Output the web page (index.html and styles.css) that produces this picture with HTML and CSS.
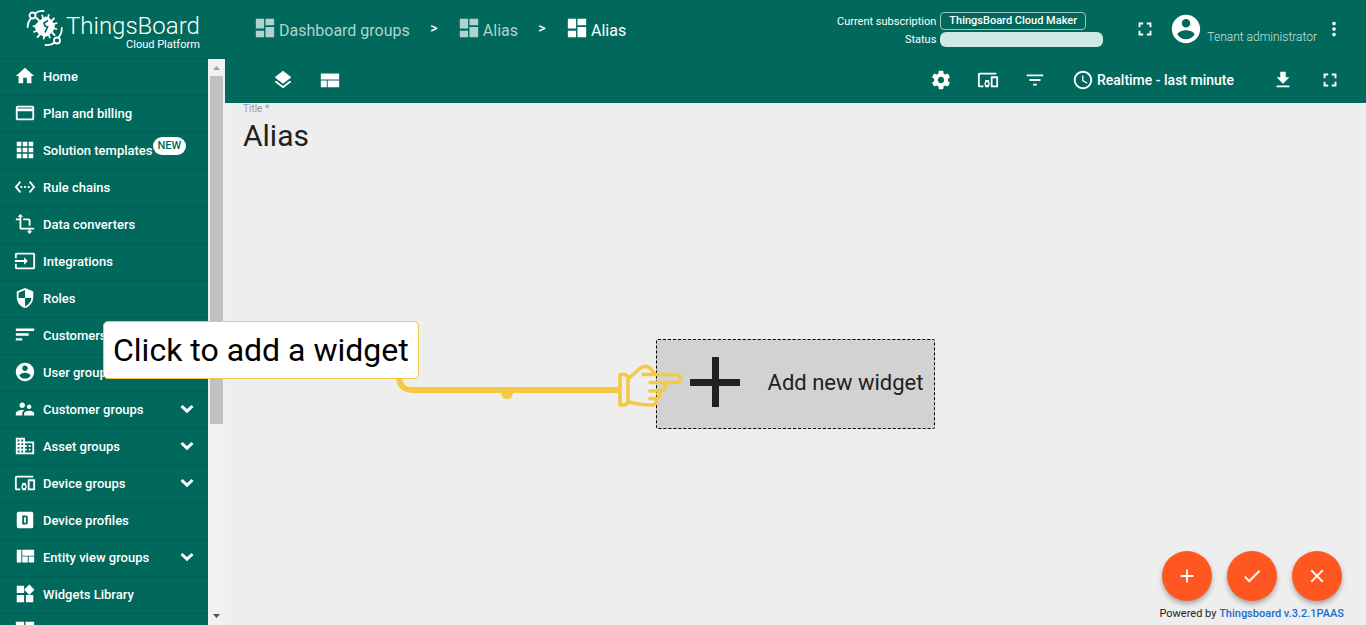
FILE: index.html
```html
<!DOCTYPE html>
<html lang="en">
<head>
<meta charset="utf-8">
<meta name="viewport" content="width=device-width, initial-scale=1">
<title>Alias | ThingsBoard Cloud</title>
<link rel="stylesheet" href="styles.css">
</head>
<body>
<svg class="sprite" aria-hidden="true">
  <symbol id="home" viewBox="0 0 24 24"><path d="M10 20v-6h4v6h5v-8h3L12 3 2 12h3v8z"/></symbol>
  <symbol id="card" viewBox="0 0 24 24"><path d="M20 4H4c-1.110 0-2 .89-2 2v12c0 1.110.89 2 2 2h16c1.110 0 2-.89 2-2V6c0-1.110-.89-2-2-2zm0 14H4v-8h16v8zm0-11H4V6h16v1z"/></symbol>
  <symbol id="apps" viewBox="0 0 24 24"><path d="M3 3h5v5H3zM9.500 3h5v5h-5zM16 3h5v5h-5zM3 9.500h5v5H3zM9.500 9.500h5v5h-5zM16 9.500h5v5h-5zM3 16h5v5H3zM9.500 16h5v5h-5zM16 16h5v5h-5z"/></symbol>
  <symbol id="ethernet" viewBox="0 0 24 24"><path d="M7.770 6.760L6.230 5.480.82 12l5.410 6.520 1.540-1.280L3.420 12l4.350-5.240zM7 13h2v-2H7v2zm10-2h-2v2h2v-2zm-6 2h2v-2h-2v2zm6.770-7.520l-1.540 1.280L20.580 12l-4.350 5.240 1.540 1.280L23.180 12l-5.410-6.520z"/></symbol>
  <symbol id="transform" viewBox="0 0 24 24"><path d="M22 18v-2H8V4h2L7 1 4 4h2v2H2v2h4v8c0 1.100.9 2 2 2h8v2h-2l3 3 3-3h-2v-2h4zM10 8h6v6h2V8c0-1.100-.9-2-2-2h-6v2z"/></symbol>
  <symbol id="input" viewBox="0 0 24 24"><path d="M21 3.010H3c-1.100 0-2 .9-2 2V9h2V4.990h18v14.030H3V15H1v4.010c0 1.100.9 1.980 2 1.980h18c1.100 0 2-.88 2-1.980v-14c0-1.110-.9-2-2-2zM11 16l4-4-4-4v3H1v2h10v3z"/></symbol>
  <symbol id="shield" viewBox="0 0 24 24"><path d="M12 1L3 5v6c0 5.550 3.840 10.740 9 12 5.160-1.260 9-6.450 9-12V5l-9-4zm0 10.990h7c-.53 4.120-3.280 7.790-7 8.940V12H5V6.300l7-3.110v8.800z"/></symbol>
  <symbol id="sort" viewBox="0 0 24 24"><path d="M2 18h7v-2.500H2V18zM2 5v2.500h20V5H2zm0 7.700h14v-2.500H2v2.500z"/></symbol>
  <symbol id="account" viewBox="0 0 24 24"><path d="M12 2C6.480 2 2 6.480 2 12s4.480 10 10 10 10-4.480 10-10S17.520 2 12 2zm0 3c1.660 0 3 1.340 3 3s-1.340 3-3 3-3-1.340-3-3 1.340-3 3-3zm0 14.200c-2.500 0-4.710-1.280-6-3.220.03-1.990 4-3.080 6-3.080 1.990 0 5.970 1.090 6 3.080-1.290 1.940-3.500 3.220-6 3.220z"/></symbol>
  <symbol id="people" viewBox="0 0 24 24"><path d="M16.500 12c1.380 0 2.490-1.120 2.490-2.500S17.880 7 16.500 7 14 8.120 14 9.500s1.120 2.500 2.500 2.500zM9 11c1.660 0 2.990-1.340 2.990-3S10.660 5 9 5 6 6.340 6 8s1.340 3 3 3zm7.500 3c-1.830 0-5.500.92-5.500 2.750V19h11v-2.250c0-1.830-3.670-2.750-5.500-2.750zM9 13c-2.330 0-7 1.170-7 3.500V19h7v-2.250c0-.85.33-2.340 2.370-3.470C10.500 13.100 9.660 13 9 13z"/></symbol>
  <symbol id="building" viewBox="0 0 24 24"><path d="M12 7V3H2v18h20V7H12zM6 19H4v-2h2v2zm0-4H4v-2h2v2zm0-4H4V9h2v2zm0-4H4V5h2v2zm4 12H8v-2h2v2zm0-4H8v-2h2v2zm0-4H8V9h2v2zm0-4H8V5h2v2zm10 12h-8v-2h2v-2h-2v-2h2v-2h-2V9h8v10zm-2-8h-2v2h2v-2zm0 4h-2v2h2v-2z"/></symbol>
  <symbol id="devices" viewBox="0 0 24 24"><path d="M3 6h18V4H3c-1.100 0-2 .9-2 2v12c0 1.100.9 2 2 2h4v-2H3V6zm10 6H9v1.780c-.61.55-1 1.330-1 2.220s.39 1.670 1 2.220V20h4v-1.780c.61-.55 1-1.340 1-2.220s-.39-1.670-1-2.220V12zm-2 5.500c-.83 0-1.500-.67-1.500-1.500s.67-1.500 1.500-1.500 1.500.67 1.500 1.500-.67 1.500-1.500 1.500zM22 8h-6c-.5 0-1 .5-1 1v10c0 .5.5 1 1 1h6c.5 0 1-.5 1-1V9c0-.5-.5-1-1-1zm-1 10h-4v-8h4v8z"/></symbol>
  <symbol id="profile" viewBox="0 0 24 24"><path fill-rule="evenodd" d="M5 3h14a2 2 0 0 1 2 2v14a2 2 0 0 1-2 2H5a2 2 0 0 1-2-2V5a2 2 0 0 1 2-2zm4 4v10h4a2 2 0 0 0 2-2V9a2 2 0 0 0-2-2H9zm2 2h2v6h-2V9z"/></symbol>
  <symbol id="quilt" viewBox="0 0 24 24"><path d="M3 4h5v14H3zM9 4h13v6.500H9zM9 11.500h6V18H9zM16 11.500h6V18h-6z"/></symbol>
  <symbol id="widgets" viewBox="0 0 24 24"><path d="M13 13v8h8v-8h-8zM3 21h8v-8H3v8zM3 3v8h8V3H3zm13.660-1.310L11 7.340 16.660 13l5.660-5.660-5.660-5.650z"/></symbol>
  <symbol id="dashboard" viewBox="0 0 24 24"><path d="M2 12.500h9V2H2zM2 22h9v-7H2zM12.500 22H22V11h-9.500zM12.500 2v7H22V2z"/></symbol>
  <symbol id="chevron" viewBox="0 0 14 10"><path d="M1.500 2L7 7.200 12.500 2" fill="none" stroke="currentColor" stroke-width="3"/></symbol>
  <symbol id="layers" viewBox="0 0 24 24"><path d="M12 18.540l-7.370-5.730L3 14.070l9 7 9-7-1.630-1.270-7.370 5.740zM12 16l7.360-5.730L21 9l-9-7-9 7 1.630 1.270L12 16z"/></symbol>
  <symbol id="compact" viewBox="0 0 24 24"><path d="M2 5h20v6.500H2zM2 12.500h6.500V20H2zM9.500 12.500H22V20H9.500z"/></symbol>
  <symbol id="gear" viewBox="0 0 24 24"><path d="M19.430 12.980c.04-.32.07-.64.07-.98s-.03-.66-.07-.98l2.110-1.650c.19-.15.24-.42.12-.64l-2-3.460c-.12-.22-.39-.3-.61-.22l-2.490 1c-.52-.4-1.080-.73-1.690-.98l-.38-2.650C14.460 2.180 14.250 2 14 2h-4c-.25 0-.46.18-.49.42l-.38 2.650c-.61.25-1.170.59-1.690.98l-2.490-1c-.23-.09-.49 0-.61.22l-2 3.460c-.13.22-.07.49.12.64l2.110 1.650c-.04.32-.07.65-.07.98s.03.66.07.98l-2.110 1.650c-.19.15-.24.42-.12.64l2 3.460c.12.22.39.3.61.22l2.490-1c.52.4 1.080.73 1.690.98l.38 2.650c.03.24.24.42.49.42h4c.25 0 .46-.18.49-.42l.38-2.650c.61-.25 1.170-.59 1.690-.98l2.490 1c.23.09.49 0 .61-.22l2-3.460c.12-.22.07-.49-.12-.64l-2.110-1.650zM12 15.500c-1.930 0-3.500-1.570-3.500-3.500s1.570-3.500 3.500-3.500 3.500 1.570 3.500 3.500-1.570 3.500-3.500 3.500z"/></symbol>
  <symbol id="filter" viewBox="0 0 24 24"><path d="M10 18h4v-2h-4v2zM3 6v2h18V6H3zm3 7h12v-2H6v2z"/></symbol>
  <symbol id="clock" viewBox="0 0 24 24"><path d="M11.990 2C6.470 2 2 6.480 2 12s4.470 10 9.990 10C17.520 22 22 17.520 22 12S17.520 2 11.990 2zM12 20c-4.420 0-8-3.580-8-8s3.580-8 8-8 8 3.580 8 8-3.580 8-8 8zm.5-13H11v6l5.250 3.150.75-1.230-4.500-2.670z"/></symbol>
  <symbol id="download" viewBox="0 0 24 24"><path d="M19 9h-4V3H9v6H5l7 7 7-7zM5 18v2h14v-2H5z"/></symbol>
  <symbol id="fullscreen" viewBox="0 0 24 24"><path d="M7 14H5v5h5v-2H7v-3zm-2-4h2V7h3V5H5v5zm12 7h-3v2h5v-5h-2v3zM14 5v2h3v3h2V5h-5z"/></symbol>
  <symbol id="more" viewBox="0 0 24 24"><path d="M12 8c1.100 0 2-.9 2-2s-.9-2-2-2-2 .9-2 2 .9 2 2 2zm0 2c-1.100 0-2 .9-2 2s.9 2 2 2 2-.9 2-2-.9-2-2-2zm0 6c-1.100 0-2 .9-2 2s.9 2 2 2 2-.9 2-2-.9-2-2-2z"/></symbol>
  <symbol id="add" viewBox="0 0 24 24"><path d="M19 13h-6v6h-2v-6H5v-2h6V5h2v6h6v2z"/></symbol>
  <symbol id="check" viewBox="0 0 24 24"><path d="M9 16.170L4.830 12l-1.420 1.410L9 19 21 7l-1.410-1.410z"/></symbol>
  <symbol id="close" viewBox="0 0 24 24"><path d="M19 6.410L17.590 5 12 10.590 6.410 5 5 6.410 10.590 12 5 17.590 6.410 19 12 13.410 17.590 19 19 17.590 13.410 12z"/></symbol>
</svg>

<div class="app">
  <aside class="sidebar">
    <a class="logo" href="#">
      <svg class="logo-mark" viewBox="0 0 38 40" aria-hidden="true">
        <g fill="none" stroke="currentColor" stroke-width="1.800" stroke-linecap="round">
          <circle cx="6.500" cy="7.500" r="3"/><path d="M9 5.500C11.500 3.500 14 2.500 17.500 3M5 10.500C2.500 13 1.700 15 1.700 19"/>
          <circle cx="31" cy="32.500" r="3"/><path d="M28.500 34.500C26 37 23 37.500 19.500 37M32.500 29.500C35.500 26 36 24 35.700 20"/>
        </g>
        <path stroke="currentColor" stroke-width="1.800" stroke-linecap="round" d="M13 12.500l-2.500-2.500M17 10l-.8-2.500M22 9.500l.8-2.500M26 12.500l2-2M28 16l2.500-.8M28.500 20.500l2 .5M26.500 25l2 2M23 27.500l.8 2M18 28.500l-.2 2M13.500 27l-2 2M10.500 23l-2.500.8M9.500 18.500l-2-.3"/>
        <path fill="currentColor" d="M19.500 8.500l3.500 1 5 6 1 3-2 5-5 4.500-3.500 1-6-3-3.500-5.500.5-4 4-4z"/>
        <path fill="none" stroke="#00695c" stroke-width="1.700" d="M22 12.500l-4 2.500 1 3 2.500 1-2.500 5.500"/>
      </svg>
      <span class="logo-text"><span class="logo-name">ThingsBoard</span><span class="logo-sub">Cloud Platform</span></span>
    </a>
    <div class="menu">
      <nav class="menu-list">
        <a class="menu-item" href="#"><svg class="icon"><use href="#home"/></svg>Home</a>
        <a class="menu-item" href="#"><svg class="icon"><use href="#card"/></svg>Plan and billing</a>
        <a class="menu-item" href="#"><svg class="icon"><use href="#apps"/></svg>Solution templates<span class="tag">NEW</span></a>
        <a class="menu-item" href="#"><svg class="icon"><use href="#ethernet"/></svg>Rule chains</a>
        <a class="menu-item" href="#"><svg class="icon"><use href="#transform"/></svg>Data converters</a>
        <a class="menu-item" href="#"><svg class="icon"><use href="#input"/></svg>Integrations</a>
        <a class="menu-item" href="#"><svg class="icon"><use href="#shield"/></svg>Roles</a>
        <a class="menu-item" href="#"><svg class="icon"><use href="#sort"/></svg>Customers</a>
        <a class="menu-item" href="#"><svg class="icon"><use href="#account"/></svg>User groups</a>
        <a class="menu-item" href="#"><svg class="icon"><use href="#people"/></svg>Customer groups<svg class="chevron"><use href="#chevron"/></svg></a>
        <a class="menu-item" href="#"><svg class="icon"><use href="#building"/></svg>Asset groups<svg class="chevron"><use href="#chevron"/></svg></a>
        <a class="menu-item" href="#"><svg class="icon"><use href="#devices"/></svg>Device groups<svg class="chevron"><use href="#chevron"/></svg></a>
        <a class="menu-item" href="#"><svg class="icon"><use href="#profile"/></svg>Device profiles</a>
        <a class="menu-item" href="#"><svg class="icon"><use href="#quilt"/></svg>Entity view groups<svg class="chevron"><use href="#chevron"/></svg></a>
        <a class="menu-item" href="#"><svg class="icon"><use href="#widgets"/></svg>Widgets Library</a>
        <a class="menu-item" href="#" aria-label="Dashboard groups"><svg class="icon"><use href="#dashboard"/></svg></a>
      </nav>
      <div class="scrollbar" aria-hidden="true">
        <svg class="scroll-arrow muted" viewBox="0 0 17 17"><path d="M5 11l3.500-4 3.500 4z"/></svg>
        <div class="scroll-track"><div class="scroll-thumb"></div></div>
        <svg class="scroll-arrow" viewBox="0 0 17 17"><path d="M5 6l3.500 4L12 6z"/></svg>
      </div>
    </div>
  </aside>

  <div class="page">
    <header class="topbar">
      <nav class="crumbs" aria-label="Breadcrumb">
        <a class="crumb" href="#"><svg class="icon"><use href="#dashboard"/></svg>Dashboard groups</a>
        <span class="crumb-sep">&gt;</span>
        <a class="crumb" href="#"><svg class="icon"><use href="#dashboard"/></svg>Alias</a>
        <span class="crumb-sep">&gt;</span>
        <span class="crumb current"><svg class="icon"><use href="#dashboard"/></svg>Alias</span>
      </nav>
      <div class="subscription">
        <span class="sub-label">Current subscription</span><a class="plan" href="#">ThingsBoard Cloud Maker</a>
        <span class="sub-label">Status</span><span class="status"></span>
      </div>
      <div class="user">
        <button class="icon-button" type="button" aria-label="Fullscreen"><svg class="icon"><use href="#fullscreen"/></svg></button>
        <svg class="avatar"><use href="#account"/></svg>
        <span class="role">Tenant administrator</span>
        <button class="icon-button more" type="button" aria-label="User menu"><svg class="icon"><use href="#more"/></svg></button>
      </div>
    </header>

    <div class="toolbar">
      <div class="tools">
        <button class="icon-button" type="button" aria-label="Manage states"><svg class="icon"><use href="#layers"/></svg></button>
        <button class="icon-button" type="button" aria-label="Manage layouts"><svg class="icon"><use href="#compact"/></svg></button>
      </div>
      <div class="tools">
        <button class="icon-button" type="button" aria-label="Settings"><svg class="icon"><use href="#gear"/></svg></button>
        <button class="icon-button" type="button" aria-label="Entity aliases"><svg class="icon"><use href="#devices"/></svg></button>
        <button class="icon-button" type="button" aria-label="Filters"><svg class="icon"><use href="#filter"/></svg></button>
        <button class="icon-button timewindow" type="button"><svg class="icon"><use href="#clock"/></svg>Realtime - last minute</button>
        <button class="icon-button" type="button" aria-label="Export"><svg class="icon"><use href="#download"/></svg></button>
        <button class="icon-button" type="button" aria-label="Expand dashboard"><svg class="icon"><use href="#fullscreen"/></svg></button>
      </div>
    </div>

    <main class="dashboard">
      <div class="title-field">
        <label class="title-label" for="title">Title *</label>
        <input class="title-input" id="title" type="text" value="Alias">
      </div>
      <div class="canvas">
        <button class="add-widget" type="button">
          <svg class="plus" viewBox="0 0 50 50" aria-hidden="true"><path d="M22 0h7v22h21v7H29v21h-7V29H0v-7h22z"/></svg>
          Add new widget
        </button>
      </div>
      <div class="corner">
        <div class="fabs">
          <button class="fab" type="button" aria-label="Add"><svg class="icon"><use href="#add"/></svg></button>
          <button class="fab" type="button" aria-label="Apply"><svg class="icon"><use href="#check"/></svg></button>
          <button class="fab" type="button" aria-label="Cancel"><svg class="icon"><use href="#close"/></svg></button>
        </div>
        <span class="powered">Powered by <a href="#">Thingsboard v.3.2.1PAAS</a></span>
      </div>
    </main>
  </div>

  <svg class="pointer" viewBox="0 0 288 48" aria-hidden="true">
    <g fill="none" stroke="#f6c945">
      <path stroke-width="6" d="M3 14C3 22 8 27 16 27H223"/>
      <g stroke-width="3.600" stroke-linejoin="round" stroke-linecap="round">
        <path fill="#eee" d="M224 11.500h5l3 2v26l-3 2.500h-5z"/>
        <path d="M233 15L244 5.500C248 2.500 252 3 255 6l4 5"/>
        <path d="M247 11.500h33c6 0 6 8 0 8h-26M269 20c1 5-1 8-5 8h-10M264 28c1 5-1 7.500-4 7.500h-6M260 36c1 4-1 6-4 6-9 0-16-1-23-3"/>
      </g>
    </g>
    <circle cx="111" cy="30" r="6" fill="#f6c945"/>
  </svg>
  <div class="hint" role="tooltip">Click to add a widget</div>
</div>
</body>
</html>
```
FILE: styles.css
```css
* {
  box-sizing: border-box;
}

body {
  margin: 0;
  font-family: Roboto, "Liberation Sans", sans-serif;
  font-size: 14px;
  color: #212121;
}

a {
  color: inherit;
  text-decoration: none;
}

button {
  padding: 0;
  border: 0;
  background: none;
  color: inherit;
  font: inherit;
  cursor: pointer;
}

svg {
  flex: none;
  fill: currentColor;
}

.sprite {
  position: absolute;
  width: 0;
  height: 0;
}

.icon {
  width: 22px;
  height: 22px;
}

.app {
  position: relative;
  display: flex;
  height: 100vh;
  overflow: hidden;
}

/* Sidebar */
.sidebar {
  display: flex;
  flex: none;
  flex-direction: column;
  width: 225px;
  background: #00695c;
  color: #fff;
}

.logo {
  display: flex;
  gap: 2px;
  height: 59px;
  padding: 8px 26px 0;
  border-bottom: 1px solid #005f53;
}

.logo-mark {
  width: 38px;
  height: 40px;
}

.logo-text {
  display: flex;
  flex-direction: column;
  align-items: flex-end;
  padding-top: 5px;
}

.logo-name {
  font-size: 24px;
  font-weight: 300;
  line-height: 27px;
}

.logo-sub {
  font-size: 11px;
  line-height: 10px;
}

.menu {
  display: flex;
  flex: 1;
  min-height: 0;
}

.menu-list {
  flex: 1;
  overflow: hidden;
}

.menu-item {
  display: flex;
  align-items: center;
  height: 37px;
  padding: 0 14px 2px;
  border-bottom: 1px solid #005f53;
  font-size: 13px;
  font-weight: 500;
  white-space: nowrap;
}

.menu-item .icon {
  margin-right: 7px;
}

.chevron {
  width: 14px;
  height: 10px;
  margin-left: auto;
}

.tag {
  margin: 0 0 8px;
  padding: 0 5px;
  border-radius: 10px;
  background: #fff;
  color: #00695c;
  font-size: 11px;
  font-weight: 500;
  line-height: 18px;
}

.scrollbar {
  display: flex;
  flex-direction: column;
  width: 17px;
  background: #f1f1f1;
}

.scroll-arrow {
  width: 17px;
  height: 17px;
  color: #505050;
}

.muted {
  color: #a3a3a3;
}

.scroll-track {
  flex: 1;
  padding: 0 2px;
}

.scroll-thumb {
  height: 65.500%;
  background: #c1c1c1;
}

/* Header */
.page {
  display: flex;
  flex: 1;
  flex-direction: column;
  min-width: 0;
}

.topbar {
  display: flex;
  flex: none;
  height: 56px;
  background: #00695c;
  color: #fff;
}

.crumbs {
  display: flex;
  flex: 1;
  align-items: center;
  padding-left: 29px;
  font-size: 16px;
  white-space: nowrap;
}

.crumb {
  display: flex;
  gap: 3px;
  align-items: center;
  padding-top: 4px;
  color: #b2d2ce;
}

.crumb .icon {
  margin-bottom: 4px;
}

.crumb.current {
  color: #fff;
}

.crumb-sep {
  width: 48px;
  font-size: 14px;
  font-weight: 500;
  text-align: center;
}

.subscription {
  display: grid;
  grid-template-columns: auto 163px;
  grid-template-rows: 18px 15px;
  gap: 2px 4px;
  align-items: center;
  justify-items: start;
  padding: 12px 14px 0 0;
  align-content: start;
  font-size: 11px;
}

.sub-label {
  justify-self: end;
}

.plan {
  padding: 0 8px;
  border: 1px solid #9cc6c0;
  border-radius: 4px;
  font-weight: 500;
  line-height: 16px;
}

.status {
  width: 100%;
  height: 15px;
  border-radius: 6px;
  background: #cdeae5;
}

.user {
  display: flex;
  align-items: center;
  padding: 2px 21px 0 16px;
  border-left: 1px solid #006054;
}

.icon-button {
  display: flex;
  align-items: center;
}

.avatar {
  width: 34px;
  height: 34px;
  margin: 0 4px 0 13px;
}

.role {
  padding-top: 15px;
  color: #cce1de;
  font-size: 12px;
  font-weight: 300;
}

.more {
  margin-left: 6px;
}

.toolbar {
  display: flex;
  flex: none;
  justify-content: space-between;
  height: 47px;
  padding: 0 25px 0 47px;
  background: #00695c;
  color: #fff;
}

.tools {
  display: flex;
  gap: 25px;
  align-items: center;
}

.timewindow {
  gap: 3px;
  margin: 0 13px 0 1px;
  font-weight: 500;
}

/* Dashboard */
.dashboard {
  position: relative;
  display: flex;
  flex: 1;
  flex-direction: column;
  background: #eee;
}

.title-field {
  display: flex;
  flex-direction: column;
  height: 40px;
  padding-left: 18px;
}

.title-label {
  color: #999;
  font-size: 10px;
  line-height: 12px;
}

.title-input {
  width: 50%;
  padding: 0;
  border: 0;
  background: none;
  color: #212121;
  font-family: inherit;
  font-size: 30px;
  line-height: 42px;
}

.canvas {
  display: flex;
  flex: 1;
  align-items: center;
  justify-content: center;
}

.add-widget {
  display: flex;
  gap: 28px;
  align-items: center;
  height: 90px;
  padding: 0 11px 4px 33px;
  border: 1px dashed #000;
  border-radius: 2px;
  background: #d2d2d2;
  font-size: 22px;
}

.plus {
  width: 50px;
  height: 50px;
}

.corner {
  position: absolute;
  right: 22px;
  bottom: 3px;
  display: flex;
  flex-direction: column;
  gap: 5px;
  align-items: center;
}

.fabs {
  display: flex;
  gap: 15px;
}

.fab {
  display: flex;
  align-items: center;
  justify-content: center;
  width: 50px;
  height: 50px;
  border-radius: 50%;
  background: #ff5722;
  box-shadow: 0 3px 5px rgba(0, 0, 0, 0.3);
  color: #fff;
}

.powered {
  font-size: 11px;
  line-height: 16px;
}

.powered a {
  color: #1a6dcb;
  font-weight: 500;
}

/* Guided tour */
.pointer {
  position: absolute;
  top: 363px;
  left: 396px;
  width: 288px;
  height: 48px;
}

.hint {
  position: absolute;
  top: 321px;
  left: 103px;
  padding: 0 9px;
  border: 1px solid #edc84c;
  border-radius: 5px;
  background: #fff;
  color: #000;
  font-size: 32px;
  line-height: 56px;
  white-space: nowrap;
}
```
